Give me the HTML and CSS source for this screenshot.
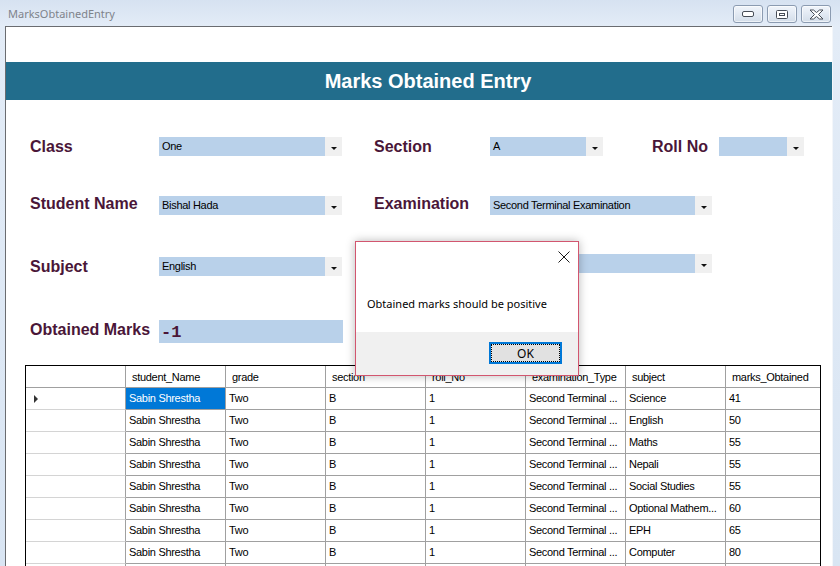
FILE: index.html
```html
<!DOCTYPE html>
<html>
<head>
<meta charset="utf-8">
<title>MarksObtainedEntry</title>
<link rel="stylesheet" href="styles.css">
</head>
<body>
<div class="window">
  <div class="titlebar">
    <span class="title">MarksObtainedEntry</span>
    <div class="caption-buttons">
      <span class="cap"><svg width="12" height="6" viewBox="0 0 12 6"><rect x="0.5" y="0.5" width="11" height="5" rx="1.5" fill="#fff" stroke="#474d57"/></svg></span>
      <span class="cap"><svg width="12" height="9" viewBox="0 0 12 9"><rect x="0.5" y="0.5" width="11" height="8" rx="1" fill="#fff" stroke="#474d57"/><rect x="3.5" y="3.5" width="5" height="2" fill="none" stroke="#474d57"/></svg></span>
      <span class="cap"><svg width="15" height="11" viewBox="0 0 15 11"><polygon points="1,1 4.5,1 7.5,3.5 10.5,1 14,1 9.5,5.5 14,10 10.5,10 7.5,7.5 4.5,10 1,10 5.5,5.5" fill="#fff" stroke="#474d57" stroke-linejoin="round"/></svg></span>
    </div>
  </div>
  <div class="frame">
    <div class="client">
      <div class="banner">Marks Obtained Entry</div>
      <div class="form">
        <div class="row">
          <span class="lbl w1">Class</span>
          <div class="combo c-main"><span class="field">One</span><span class="drop"></span></div>
          <span class="lbl w2">Section</span>
          <div class="combo c-sec"><span class="field">A</span><span class="drop"></span></div>
          <span class="lbl w3">Roll No</span>
          <div class="combo c-roll"><span class="field"></span><span class="drop"></span></div>
        </div>
        <div class="row r2">
          <span class="lbl w1 up">Student Name</span>
          <div class="combo c-main"><span class="field">Bishal Hada</span><span class="drop"></span></div>
          <span class="lbl w2 up">Examination</span>
          <div class="combo c-exam"><span class="field">Second Terminal Examination</span><span class="drop"></span></div>
        </div>
        <div class="row r3">
          <span class="lbl w1">Subject</span>
          <div class="combo c-main"><span class="field">English</span><span class="drop"></span></div>
          <span class="lbl w2"></span>
          <div class="combo c-exam c-up"><span class="field"></span><span class="drop"></span></div>
        </div>
        <div class="row r4">
          <span class="lbl w1 up">Obtained Marks</span>
          <div class="marks">-1</div>
        </div>
      </div>
      <div class="grid">
        <div class="gr gh">
          <div class="rh"></div><div>student_Name</div><div>grade</div><div>section</div><div>roll_No</div><div>examination_Type</div><div>subject</div><div>marks_Obtained</div>
        </div>
        <div class="gr">
          <div class="rh cur"></div><div class="sel">Sabin Shrestha</div><div>Two</div><div>B</div><div>1</div><div>Second Terminal ...</div><div>Science</div><div>41</div>
        </div>
        <div class="gr">
          <div class="rh"></div><div>Sabin Shrestha</div><div>Two</div><div>B</div><div>1</div><div>Second Terminal ...</div><div>English</div><div>50</div>
        </div>
        <div class="gr">
          <div class="rh"></div><div>Sabin Shrestha</div><div>Two</div><div>B</div><div>1</div><div>Second Terminal ...</div><div>Maths</div><div>55</div>
        </div>
        <div class="gr">
          <div class="rh"></div><div>Sabin Shrestha</div><div>Two</div><div>B</div><div>1</div><div>Second Terminal ...</div><div>Nepali</div><div>55</div>
        </div>
        <div class="gr">
          <div class="rh"></div><div>Sabin Shrestha</div><div>Two</div><div>B</div><div>1</div><div>Second Terminal ...</div><div>Social Studies</div><div>55</div>
        </div>
        <div class="gr">
          <div class="rh"></div><div>Sabin Shrestha</div><div>Two</div><div>B</div><div>1</div><div>Second Terminal ...</div><div>Optional Mathem...</div><div>60</div>
        </div>
        <div class="gr">
          <div class="rh"></div><div>Sabin Shrestha</div><div>Two</div><div>B</div><div>1</div><div>Second Terminal ...</div><div>EPH</div><div>65</div>
        </div>
        <div class="gr">
          <div class="rh"></div><div>Sabin Shrestha</div><div>Two</div><div>B</div><div>1</div><div>Second Terminal ...</div><div>Computer</div><div>80</div>
        </div>
        <div class="gr">
          <div class="rh"></div><div></div><div></div><div></div><div></div><div></div><div></div><div></div>
        </div>
      </div>
    </div>
    <div class="rframe"></div>
  </div>

  <div class="dialog">
    <div class="dlg-top">
      <div class="dlg-head">
        <svg width="12" height="12" viewBox="0 0 12 12"><path d="M0.5 0.5 L11.5 11.5 M11.5 0.5 L0.5 11.5" stroke="#1a1a1a" stroke-width="1"/></svg>
      </div>
      <p class="msg">Obtained marks should be positive</p>
    </div>
    <div class="dlg-foot">
      <span class="ok">OK</span>
    </div>
  </div>
</div>
</body>
</html>
```
FILE: styles.css
```css
* { box-sizing: border-box; margin: 0; padding: 0; }
html, body { width: 840px; height: 566px; overflow: hidden; }
body { background: #dbe6f4; font-family: "Liberation Sans", Arial, sans-serif; }

.window {
  width: 840px; height: 566px; position: relative;
  display: flex; flex-direction: column;
  background: linear-gradient(#d6e2f1, #e3ecf7 26px, #d9e5f3);
}

.titlebar {
  height: 26px; flex: none;
  display: flex; justify-content: space-between; align-items: flex-start;
  padding: 0 9px 0 8px;
}
.title {
  font-family: "Noto Sans", sans-serif; font-size: 11px; color: #7e838b;
  line-height: 16px; margin-top: 6px;
}
.caption-buttons { display: flex; gap: 4px; margin-top: 5px; }
.cap {
  width: 30px; height: 18px;
  border: 1px solid #8b9bb1; border-radius: 3px;
  background: linear-gradient(#f1f5fb, #e2e9f3 50%, #d3dde9);
  box-shadow: inset 0 0 0 1px rgba(255,255,255,.6);
  display: flex; align-items: center; justify-content: center;
}

.frame { flex: 1; min-height: 0; display: flex; padding-left: 5px; }
.client {
  width: 827px; flex: none;
  border-left: 1px solid #6a6c70; border-top: 1px solid #6a6c70;
  background: #fff; overflow: hidden;
  display: flex; flex-direction: column;
}
.rframe { flex: 1; border-left: 1px solid #f3f6fa; }

.banner {
  margin-top: 35px; height: 38px; flex: none;
  background: #226d8c; color: #fff;
  font-weight: bold; font-size: 20px;
  display: flex; align-items: center; justify-content: center;
  padding-left: 18px;
}

.form { padding: 37px 0 0 24px; flex: none; }
.row { display: flex; align-items: center; height: 19px; }
.r2 { margin-top: 40px; }
.r3 { margin-top: 42px; }
.r4 { margin-top: 44px; height: 23px; }

.lbl { font-weight: bold; font-size: 16px; color: #4a1638; white-space: nowrap; }
.up { margin-bottom: 4px; }
.w1 { width: 129px; }
.w2 { width: 116px; margin-left: 32px; }
.w3 { width: 67px; margin-left: 49px; }

.combo { display: flex; height: 19px; }
.c-main { width: 183px; }
.c-sec { width: 113px; }
.c-roll { width: 85px; }
.c-exam { width: 222px; }
.c-up { margin-bottom: 6px; }
.field {
  flex: 1; background: #b9d1ea; color: #000;
  font-size: 11px; letter-spacing: -0.3px; line-height: 19px;
  padding-left: 3px; white-space: nowrap; overflow: hidden;
}
.drop {
  width: 17px; background: #f0f0f0;
  display: flex; justify-content: center; align-items: center;
}
.drop::after {
  content: ""; margin-top: 3px;
  border-left: 3px solid transparent; border-right: 3px solid transparent;
  border-top: 3px solid #111;
}

.marks {
  width: 184px; height: 23px; background: #b9d1ea;
  font-family: "Liberation Mono", monospace; font-size: 17px; font-weight: bold;
  color: #4a1638; line-height: 25px; padding-left: 2px;
}

.grid {
  margin: 22px 0 0 19px; width: 796px; flex: 1;
  border: 1px solid #000; border-bottom: none; background: #fff;
}
.gr {
  display: grid; grid-template-columns: 100px repeat(6, 100px) 94px;
  height: 22px;
}
.gr > div {
  border-right: 1px solid #a0a0a0; border-bottom: 1px solid #a0a0a0;
  font-size: 11px; letter-spacing: -0.3px; line-height: 21px;
  padding-left: 3px; white-space: nowrap; overflow: hidden; color: #000;
}
.gr > div:last-child { border-right: none; }
.gh > div { padding-left: 6px; line-height: 22px; }
.gr > .rh { border-bottom-color: #d4d4d4; display: flex; align-items: center; padding-left: 8px; }
.gh > .rh { border-bottom-color: #a0a0a0; }
.cur::before {
  content: ""; margin-top: 1px;
  border-top: 4px solid transparent; border-bottom: 4px solid transparent;
  border-left: 4px solid #333;
}
.gr > .sel { background: #0078d7; color: #fff; }

.dialog {
  position: absolute; left: 355px; top: 241px;
  width: 224px; height: 135px;
  border: 1px solid #d2566f; background: #fff;
  box-shadow: 0 0 9px rgba(0,0,0,.28);
  display: flex; flex-direction: column;
}
.dlg-top { height: 90px; flex: none; }
.dlg-head { display: flex; justify-content: flex-end; padding: 9px 8px 0 0; height: 21px; }
.msg {
  font-family: "Noto Sans", sans-serif; font-size: 11px; color: #000;
  line-height: 16px; margin-top: 33px; padding-left: 11px; white-space: nowrap;
}
.dlg-foot {
  flex: 1; background: #f0f0f0;
  display: flex; justify-content: flex-end; align-items: flex-start;
  padding: 10px 16px 0 0;
}
.ok {
  width: 73px; height: 22px;
  border: 2px solid #0078d7; background: #e1e1e1;
  outline: 1px dotted #000; outline-offset: -3px;
  font-family: "Noto Sans", sans-serif; font-size: 12px; color: #000;
  display: flex; align-items: center; justify-content: center;
}
```
